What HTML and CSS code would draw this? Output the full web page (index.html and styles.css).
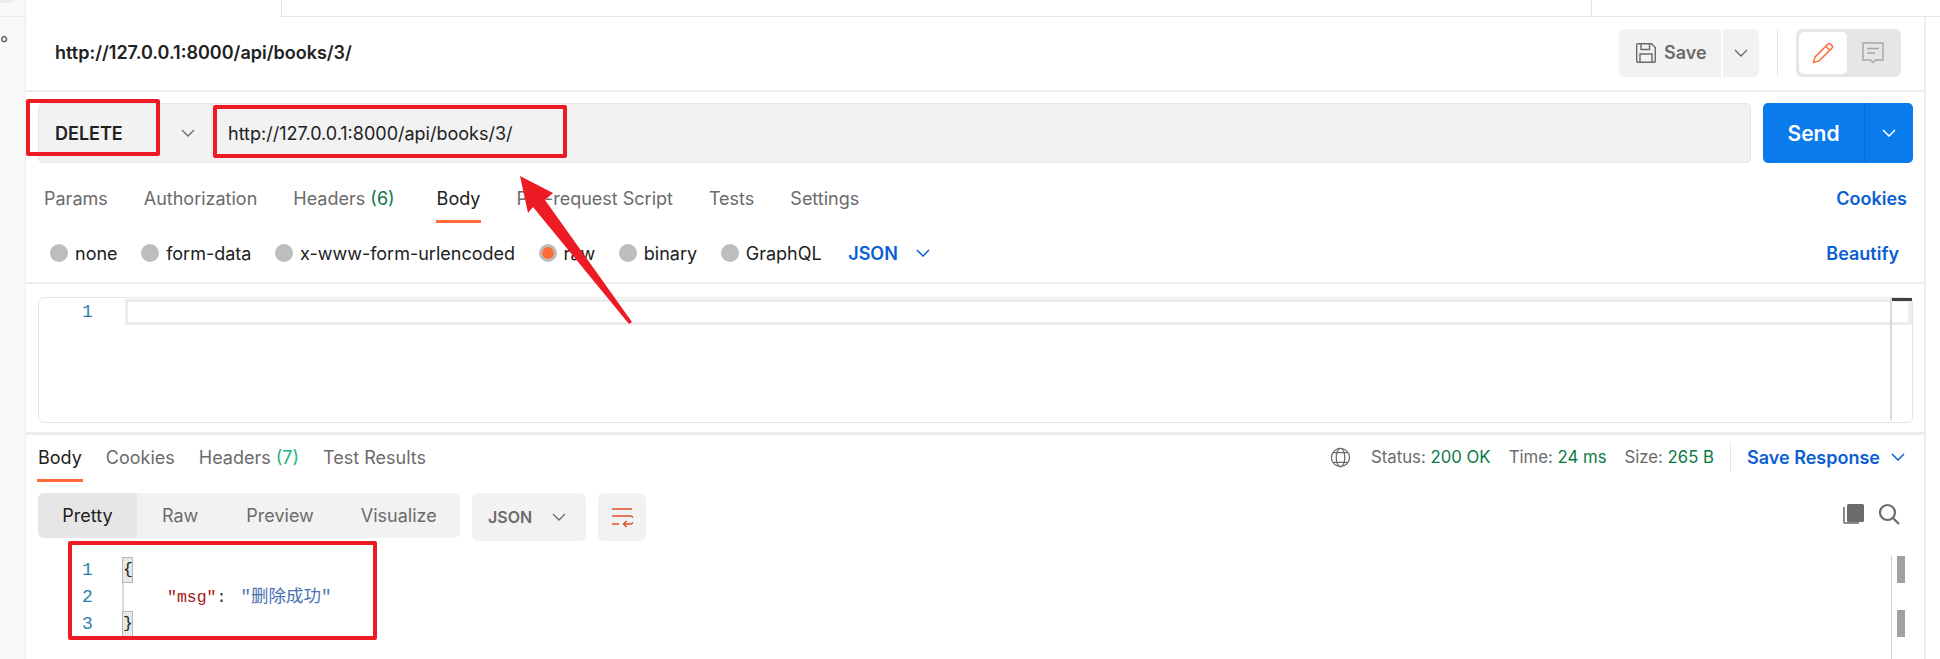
FILE: index.html
```html
<!DOCTYPE html>
<html lang="en">
<head>
<meta charset="utf-8">
<title>Postman request</title>
<link rel="stylesheet" href="styles.css">
</head>
<body>
<div class="page">
  <div class="topbar">
    <div class="top-side"><span class="top-chip"></span></div>
    <div class="top-active"></div>
    <div class="top-rest"><div class="top-sep"></div></div>
  </div>
  <div class="workspace">
    <aside class="sidebar"><span class="side-mark">°</span></aside>
    <main class="main">
      <header class="header">
        <div class="title">http://127.0.0.1:8000/api/books/3/</div>
        <div class="header-actions">
          <div class="save-group">
            <button class="save-btn">
              <svg class="ico22" viewBox="0 0 22 22" fill="none" stroke="#6b6b6b" stroke-width="1.4"><path d="M1.7 3a1.3 1.3 0 0 1 1.3-1.3h13.5l3.8 3.8V19a1.3 1.3 0 0 1-1.3 1.3H3A1.3 1.3 0 0 1 1.7 19z"/><path d="M6 2v5.5h8.5V2M5 20v-8h12v8"/></svg>
              <span>Save</span>
            </button>
            <button class="save-more"><svg class="chev" viewBox="0 0 14 8" fill="none" stroke="#6b6b6b" stroke-width="1.4"><path d="M1 1l6 6 6-6"/></svg></button>
          </div>
          <div class="vsep"></div>
          <div class="toggle">
            <div class="toggle-on"><svg class="ico22" viewBox="0 0 22 22" fill="none" stroke="#ff6c37" stroke-width="1.5"><path d="M1.5 20.5l1.6-5.6L15.8 2.2a2 2 0 0 1 2.8 0l1.2 1.2a2 2 0 0 1 0 2.8L7.100 18.900z"/><path d="M13.800 4.200l4 4"/></svg></div>
            <div class="toggle-off"><svg class="ico22" viewBox="0 0 22 22" fill="none" stroke="#a6a6a6" stroke-width="1.4"><path d="M1 1h20v17h-7.500L11 20.500 8.500 18H1z"/><path d="M5 6.500h12M5 11h8"/></svg></div>
          </div>
        </div>
      </header>

      <section class="url-row">
        <div class="url-bar">
          <div class="method"><span>DELETE</span><svg class="chev" viewBox="0 0 14 8" fill="none" stroke="#6b6b6b" stroke-width="1.4"><path d="M1 1l6 6 6-6"/></svg></div>
          <div class="url-text">http://127.0.0.1:8000/api/books/3/</div>
        </div>
        <div class="send">
          <div class="send-main">Send</div>
          <div class="send-more"><svg class="chev" viewBox="0 0 14 8" fill="none" stroke="#fff" stroke-width="1.5"><path d="M1 1l6 6 6-6"/></svg></div>
        </div>
      </section>

      <nav class="req-tabs">
        <span class="tab">Params</span>
        <span class="tab">Authorization</span>
        <span class="tab">Headers <em class="count-dark">(6)</em></span>
        <span class="tab tab-on req-body">Body</span>
        <span class="tab">Pre-request Script</span>
        <span class="tab">Tests</span>
        <span class="tab">Settings</span>
        <span class="link push">Cookies</span>
      </nav>

      <div class="body-types">
        <label class="radio"><i class="dot"></i>none</label>
        <label class="radio"><i class="dot"></i>form-data</label>
        <label class="radio"><i class="dot"></i>x-www-form-urlencoded</label>
        <label class="radio"><i class="dot dot-on"></i>raw</label>
        <label class="radio"><i class="dot"></i>binary</label>
        <label class="radio"><i class="dot"></i>GraphQL</label>
        <span class="link json-pick">JSON<svg class="chev" viewBox="0 0 14 8" fill="none" stroke="#0b5fd3" stroke-width="1.5"><path d="M1 1l6 6 6-6"/></svg></span>
        <span class="link push">Beautify</span>
      </div>

      <div class="editor-wrap">
        <div class="editor">
          <div class="ed-gutter">1</div>
          <div class="ed-line"></div>
          <div class="ed-scroll"><i></i></div>
        </div>
      </div>

      <nav class="res-tabs">
        <span class="tab tab-on res-body">Body</span>
        <span class="tab">Cookies</span>
        <span class="tab">Headers <em class="count-green">(7)</em></span>
        <span class="tab">Test Results</span>
        <div class="status push">
          <svg class="globe" viewBox="0 0 22 22" fill="none" stroke="#6b6b6b" stroke-width="1.3"><circle cx="11" cy="11" r="9.500"/><ellipse cx="11" cy="11" rx="4.500" ry="9.500"/><path d="M3 6h16M3 16h16"/></svg>
          <span class="stat">Status: <b>200 OK</b></span>
          <span class="stat">Time: <b>24 ms</b></span>
          <span class="stat">Size: <b>265 B</b></span>
          <div class="stat-sep"></div>
          <span class="link save-res">Save Response<svg class="chev" viewBox="0 0 14 8" fill="none" stroke="#0b5fd3" stroke-width="1.5"><path d="M1 1l6 6 6-6"/></svg></span>
        </div>
      </nav>

      <div class="res-tools">
        <div class="segments">
          <span class="seg seg-on">Pretty</span>
          <span class="seg seg-raw">Raw</span>
          <span class="seg seg-pre">Preview</span>
          <span class="seg seg-vis">Visualize</span>
        </div>
        <div class="format">JSON<svg class="chev" viewBox="0 0 14 8" fill="none" stroke="#6b6b6b" stroke-width="1.4"><path d="M1 1l6 6 6-6"/></svg></div>
        <div class="wrap-btn"><svg class="ico22" viewBox="0 0 22 22" fill="none" stroke="#e0532a" stroke-width="1.5"><path d="M1 3h20M1 10h18a3.500 3.500 0 0 1 0 8h-6M1 18h7"/><path d="M15.500 15l-3 3 3 3"/></svg></div>
        <div class="tools-right">
          <svg class="ico22" viewBox="0 0 22 22"><path d="M1 4h2v15h14v2H3a2 2 0 0 1-2-2z" fill="#8a8a8a"/><rect x="5" y="1" width="17" height="18" rx="1.500" fill="#6b6b6b"/></svg>
          <svg class="ico22" viewBox="0 0 22 22" fill="none" stroke="#6b6b6b" stroke-width="2.200"><circle cx="9.500" cy="9.500" r="7.500"/><path d="M15 15l6 6"/></svg>
        </div>
      </div>

      <div class="code">
        <div class="code-nums"><div>1</div><div>2</div><div>3</div></div>
        <div class="code-body">
          <div class="code-line"><span class="brace">{</span></div>
          <div class="code-line code-indent"><span class="k">"msg"</span><span class="p">:</span><span class="v">"删除成功"</span></div>
          <div class="code-line"><span class="brace">}</span></div>
        </div>
        <div class="code-scroll"><i></i><i></i></div>
      </div>
    </main>
    <aside class="rightbar"></aside>
  </div>

  <div class="mark mark-method"></div>
  <div class="mark mark-url"></div>
  <div class="mark mark-code"></div>
  <svg class="arrow" viewBox="0 0 1940 659"><polygon points="520,176 553,193 545,200 632,322 629,324 533,207 528,213" fill="#ed1c24"/></svg>
</div>
</body>
</html>
```
FILE: styles.css
```css
* { box-sizing: border-box; }
html, body { margin: 0; padding: 0; }
body { background: #fff; font-family: Inter, "Noto Sans CJK SC", sans-serif; font-size: 18px; color: #6b6b6b; overflow: hidden; }
em { font-style: normal; }
button { font: inherit; border: 0; padding: 0; color: inherit; }
svg { display: block; flex: none; }
.ico22 { width: 22px; height: 22px; }
.chev { width: 14px; height: 8px; }

.page { position: relative; width: 1940px; height: 659px; overflow: hidden; }

.topbar { display: flex; height: 17px; }
.top-side { width: 26px; background: #f9f9f9; border-right: 1px solid #ececec; border-bottom: 1px solid #ececec; }
.top-chip { display: block; width: 13px; height: 3px; background: #ededed; border-radius: 0 0 3px 0; }
.top-active { width: 256px; border-right: 1px solid #e6e6e6; }
.top-rest { flex: 1; border-bottom: 1px solid #e6e6e6; padding-left: 1309px; }
.top-sep { width: 1px; height: 16px; background: #e6e6e6; }

.workspace { display: flex; height: 642px; }
.sidebar { width: 26px; background: #f9f9f9; border-right: 1px solid #ececec; }
.side-mark { display: block; padding-top: 17px; font-size: 18px; line-height: 20px; color: #555; }
.main { width: 1900px; border-right: 2px solid #ededed; }
.rightbar { flex: 1; }

.header { display: flex; align-items: center; justify-content: space-between; height: 75px; padding: 0 23px 2px 29px; border-bottom: 2px solid #ececec; }
.title { font-weight: 600; color: #212121; }
.header-actions { display: flex; align-items: center; }
.save-group { display: flex; gap: 2px; }
.save-btn { display: flex; align-items: center; gap: 7px; width: 102px; height: 48px; padding-left: 16px; background: #f2f2f2; border-radius: 6px 0 0 6px; font-weight: 600; color: #6b6b6b; }
.save-more { display: flex; align-items: center; justify-content: center; width: 36px; height: 48px; background: #f2f2f2; border-radius: 0 6px 6px 0; }
.vsep { width: 1px; height: 48px; margin: 0 18px; background: #e6e6e6; }
.toggle { display: flex; width: 105px; height: 48px; padding: 3px; background: #e6e6e6; border-radius: 6px; }
.toggle-on { display: flex; align-items: center; justify-content: center; width: 48px; background: #fff; border-radius: 5px; }
.toggle-off { display: flex; align-items: center; justify-content: center; flex: 1; }

.url-row { display: flex; gap: 12px; padding: 11px 11px 0 12px; }
.url-bar { display: flex; width: 1713px; height: 60px; background: #f2f2f2; border: 1px solid #e6e6e6; border-radius: 5px; }
.method { display: flex; align-items: center; justify-content: space-between; width: 173px; padding: 0 16px; font-weight: 600; color: #212121; border-right: 1px solid #e6e6e6; }
.url-text { display: flex; align-items: center; padding-left: 16px; color: #212121; }
.send { display: flex; width: 150px; height: 60px; background: #097bed; border-radius: 5px; color: #fff; font-weight: 600; font-size: 21px; }
.send-main { display: flex; align-items: center; justify-content: center; width: 102px; border-right: 1px solid #0a6cd0; }
.send-more { display: flex; align-items: center; justify-content: center; flex: 1; }

.req-tabs, .res-tabs { display: flex; align-items: center; }
.req-tabs { height: 64px; padding: 6px 17px 0 18px; gap: 36px; }
.tab { position: relative; white-space: pre; }
.tab-on { color: #212121; }
.tab-on::after { content: ""; position: absolute; left: -1px; right: -1px; height: 3px; background: #ff6c37; }
.req-body { margin-left: 6px; }
.req-body::after { top: 32px; }
.count-dark { color: #0a7a45; }
.count-green { color: #26b47f; }
.link { color: #0b5fd3; font-weight: 600; }
.push { margin-left: auto; }

.body-types { display: flex; align-items: center; height: 57px; padding: 0 25px 3px 24px; border-bottom: 2px solid #ececec; color: #212121; gap: 23.600px; }
.radio { display: flex; align-items: center; gap: 7px; }
.dot { display: block; width: 18px; height: 18px; border-radius: 50%; background: #bdbdbd; }
.dot-on { background: #ff6c37; border: 3px solid #bdbdbd; }
.json-pick { display: flex; align-items: center; gap: 18px; margin-left: 3px; }

.editor-wrap { padding: 13px 11px 0 12px; height: 151px; border-bottom: 3px solid #ececec; }
.editor { position: relative; display: flex; height: 126px; border: 1px solid #e6e6e6; border-radius: 6px; color: #2a7fa8; }
.ed-gutter { width: 86px; padding: 4px 0 0 43px; font-family: "Liberation Mono", monospace; line-height: 20px; }
.ed-line { flex: 1; height: 26px; margin-top: 1px; border: solid #ececec; border-width: 3px 4px 3px 3px; }
.ed-scroll { position: absolute; top: 0; right: 0; bottom: 2px; width: 22px; border-left: 2px solid #d9d9d9; }
.ed-scroll i { display: block; height: 3px; background: #404040; }

.res-tabs { height: 44px; padding: 0 19px 0 12px; gap: 24px; }
.res-body::after { top: 32px; }
.status { display: flex; align-items: center; gap: 18px; font-size: 16.750px; }
.globe { width: 21px; height: 21px; margin-right: 2px; }
.stat { white-space: pre; }
.stat b { font-weight: 400; color: #0a7a45; }
.stat-sep { width: 1px; height: 30px; margin-left: -2px; background: #e6e6e6; }
.save-res { display: flex; align-items: center; gap: 11px; font-size: 18px; margin-left: -2px; }

.res-tools { display: flex; padding: 14px 24px 0 12px; height: 62px; }
.segments { display: flex; align-items: center; width: 422px; height: 45px; background: #f2f2f2; border-radius: 6px; overflow: hidden; }
.seg { display: flex; align-items: center; height: 100%; }
.seg-on { justify-content: center; width: 99px; background: #e6e6e6; color: #212121; }
.seg-raw { margin-left: 25px; }
.seg-pre { margin-left: 48px; }
.seg-vis { margin-left: 47px; }
.format { display: flex; align-items: center; justify-content: space-between; width: 114px; height: 48px; margin-left: 12px; padding: 0 20px 0 16px; background: #f2f2f2; border-radius: 6px; font-size: 16px; font-weight: 600; }
.wrap-btn { display: flex; align-items: center; justify-content: center; width: 48px; height: 48px; margin-left: 12px; background: #f2f2f2; border-radius: 6px; }
.tools-right { display: flex; gap: 14px; margin-left: auto; padding-top: 10px; }

.code { position: relative; display: flex; padding: 16px 0 0 56px; font-family: "Liberation Mono", "Noto Sans CJK SC", monospace; font-size: 16.500px; }
.code-nums { width: 40px; font-size: 18px; color: #2a7fa8; }
.code-nums div { height: 27px; line-height: 27px; }
.code-body { border-left: 2px solid #d9d9d9; height: 80px; }
.code-line { height: 27px; line-height: 27px; white-space: pre; }
.code-indent { padding-left: 43px; }
.brace { display: block; margin-left: -2px; width: 11px; height: 26px; background: #e4ebe2; border: 1px solid #b8b8b8; color: #222; line-height: 24px; overflow: hidden; }
.k { color: #a31515; }
.p { color: #333; }
.v { margin-left: 14px; font-size: 17.500px; color: #4a72b0; }
.code-scroll { position: absolute; top: 15px; right: 19px; width: 14px; height: 103px; border-left: 1px solid #d0d0d0; padding-left: 5px; }
.code-scroll i { display: block; width: 8px; height: 27px; margin-bottom: 27px; background: #a0a0a0; }

.mark { position: absolute; border: 4px solid #ed1c24; border-radius: 2px; pointer-events: none; }
.mark-method { left: 26px; top: 99px; width: 134px; height: 57px; }
.mark-url { left: 213px; top: 105px; width: 354px; height: 53px; }
.mark-code { left: 68px; top: 541px; width: 309px; height: 99px; }
.arrow { position: absolute; left: 0; top: 0; width: 1940px; height: 659px; pointer-events: none; }
```
